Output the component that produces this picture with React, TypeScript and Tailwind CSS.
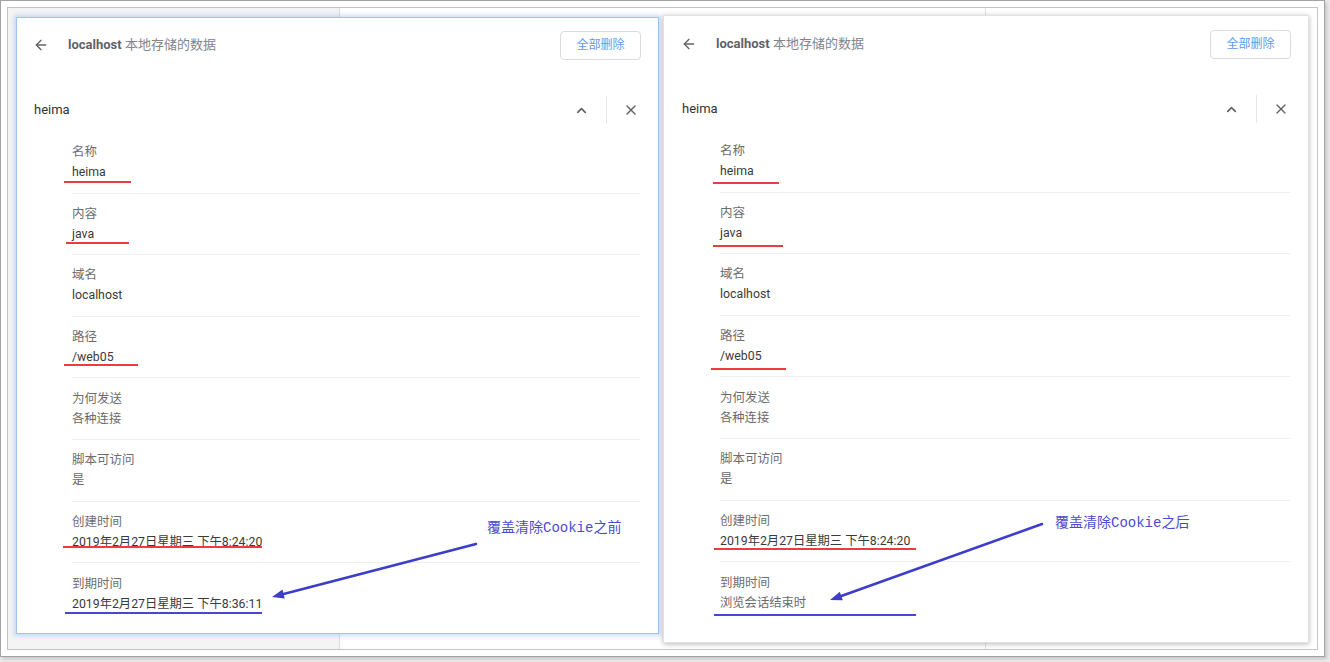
import React from "react";
import { ArrowLeft, ChevronUp, X } from "lucide-react";

type Row = { label: string; value: string; muted?: boolean };

const leftRows: Row[] = [
  { label: "名称", value: "heima" },
  { label: "内容", value: "java" },
  { label: "域名", value: "localhost" },
  { label: "路径", value: "/web05" },
  { label: "为何发送", value: "各种连接", muted: true },
  { label: "脚本可访问", value: "是", muted: true },
  { label: "创建时间", value: "2019年2月27日星期三 下午8:24:20" },
  { label: "到期时间", value: "2019年2月27日星期三 下午8:36:11" },
];

const rightRows: Row[] = [
  ...leftRows.slice(0, 7),
  { label: "到期时间", value: "浏览会话结束时", muted: true },
];

function Panel({ rows, shift }: { rows: Row[]; shift: boolean }) {
  return (
    <div className={shift ? "flex flex-col pl-[1px] pt-[1px]" : "flex flex-col"}>
      <div className="flex h-[54px] items-center pl-[16px] pr-[17px]">
        <ArrowLeft size={16} strokeWidth={2} className="text-[#5f6368]" />
        <div className="ml-[19px] text-[13px] leading-[20px]">
          <span className="font-bold text-[#5f6368]">localhost</span>
          <span className="text-[#80868b]"> 本地存储的数据</span>
        </div>
        <div className="ml-auto flex h-[29px] w-[81px] items-center justify-center rounded-[4px] border border-[#dadce0] bg-white text-[12px] text-[#5b9cf2]">
          全部删除
        </div>
      </div>
      <div className="mt-[24px] mb-[8px] flex h-[28px] items-center pl-[17px] pr-[19px]">
        <span className="text-[13px] text-[#333333]">heima</span>
        <ChevronUp size={15} strokeWidth={2.6} className="ml-auto text-[#5f6368]" />
        <div className="ml-[17px] h-[28px] w-px bg-[#e6e6e6]" />
        <X size={16} strokeWidth={2} className="ml-[16px] text-[#5f6368]" />
      </div>
      <div className="flex flex-col pl-[55px] pr-[18px]">
        {rows.map((r, i) => (
          <div
            key={i}
            className={
              i < rows.length - 1
                ? "flex h-[61.6px] flex-col justify-center border-b border-[#efefef]"
                : "flex h-[61.6px] flex-col justify-center"
            }
          >
            <div className="text-[12.5px] leading-[20px] text-[#6d6d6d]">{r.label}</div>
            <div
              className={
                r.muted
                  ? "text-[12.3px] leading-[20px] text-[#6a6a6a]"
                  : "text-[12.3px] leading-[20px] text-[#3a3a3a]"
              }
            >
              {r.value}
            </div>
          </div>
        ))}
      </div>
    </div>
  );
}

export default function App() {
  return (
    <div
      className="relative h-[662px] w-[1330px] overflow-hidden bg-[#ededed]"
      style={{ fontFamily: 'Roboto, "Noto Sans CJK SC", sans-serif' }}
    >
      <div className="h-[657px] w-[1325px] border border-[#a3a3a3] bg-white p-[6px] shadow-[2px_2px_4px_rgba(0,0,0,0.18)]">
        <div className="relative h-full w-full border border-[#c4c4c4] bg-white">
          <div className="flex h-full">
            <div className="w-[332px] border-r border-[#dcdcdc] bg-[#f4f4f4]" />
            <div className="w-[646px] border-r border-[#e2e2e2] bg-white" />
            <div className="flex-1 bg-white" />
          </div>
          <div className="absolute left-[8px] top-[9px] h-[617px] w-[643px] border border-[#9fc4f0] bg-white shadow-[0_0_4px_2px_rgba(140,185,240,0.45)]">
            <Panel rows={leftRows} shift={false} />
          </div>
          <div className="absolute left-[655px] top-[7px] h-[628px] w-[646px] border border-[#e2e2e2] bg-white shadow-[0_1px_5px_rgba(0,0,0,0.28)]">
            <Panel rows={rightRows} shift={true} />
          </div>
        </div>
      </div>

      <svg className="pointer-events-none absolute left-0 top-0" width="1330" height="662" viewBox="0 0 1330 662">
        <g stroke="#ec3b42" strokeWidth="2">
          <line x1="64" y1="182" x2="131" y2="182" />
          <line x1="66" y1="243" x2="129" y2="243" />
          <line x1="64" y1="365" x2="138" y2="365" />
          <line x1="63" y1="547" x2="262" y2="547" />
          <line x1="713" y1="183" x2="779" y2="183" />
          <line x1="713" y1="246" x2="783" y2="246" />
          <line x1="711" y1="369" x2="786" y2="369" />
          <line x1="714" y1="549" x2="916" y2="549" />
        </g>
        <g stroke="#4747d4" strokeWidth="2">
          <line x1="65" y1="613" x2="262" y2="613" />
          <line x1="714" y1="615" x2="916" y2="615" />
        </g>
        <g stroke="#3d3dcc" strokeWidth="2.5" strokeLinecap="round">
          <line x1="476" y1="544" x2="283.6" y2="594" />
          <line x1="1042" y1="524" x2="841.3" y2="596" />
        </g>
        <g fill="#3d3dcc">
          <polygon points="272,597 282.5,589.6 284.7,598.4" />
          <polygon points="830,600 839.8,591.8 842.8,600.2" />
        </g>
      </svg>

      <div
        className="absolute left-[487px] top-[518px] text-[14px] leading-[20px] text-[#4b4bcf]"
        style={{ fontFamily: '"Liberation Mono", "Noto Sans CJK SC", monospace' }}
      >
        覆盖清除Cookie之前
      </div>
      <div
        className="absolute left-[1055px] top-[513px] text-[14px] leading-[20px] text-[#4b4bcf]"
        style={{ fontFamily: '"Liberation Mono", "Noto Sans CJK SC", monospace' }}
      >
        覆盖清除Cookie之后
      </div>
    </div>
  );
}
